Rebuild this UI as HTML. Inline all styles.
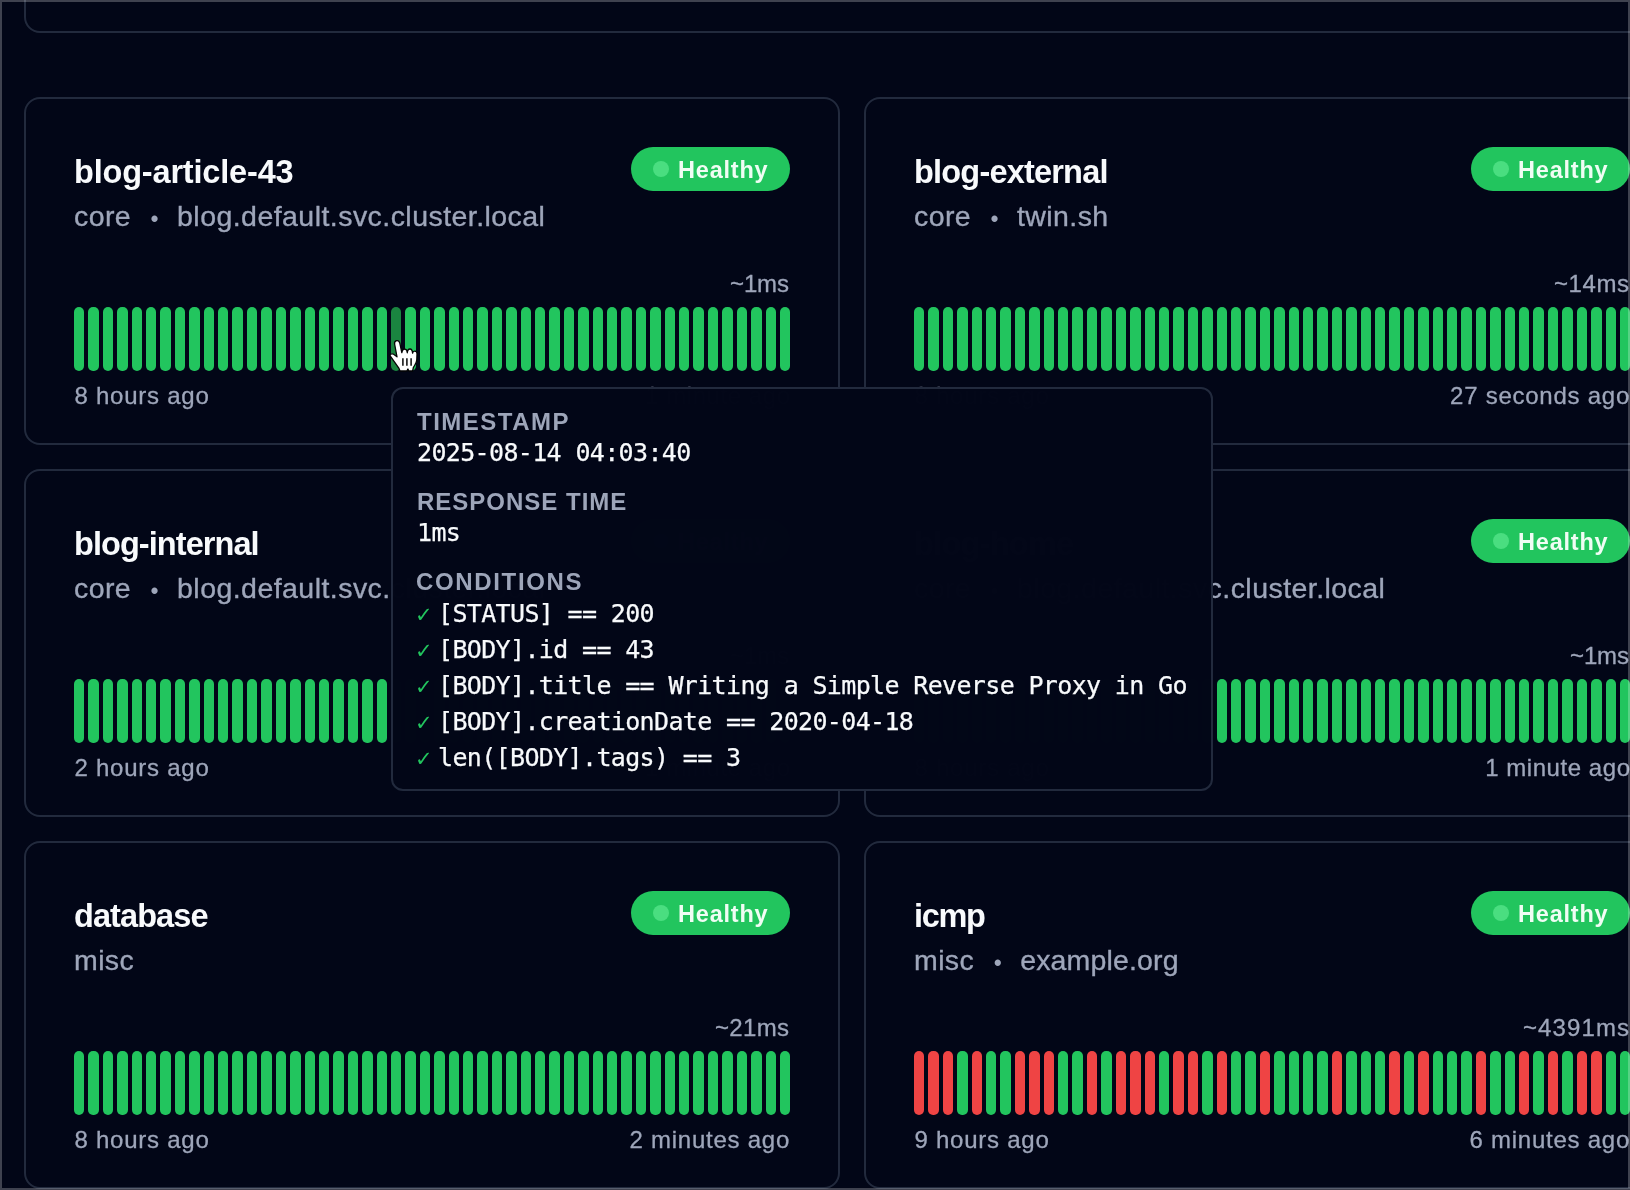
<!DOCTYPE html>
<html lang="en">
<head>
<meta charset="utf-8">
<title>Health Dashboard</title>
<style>
*{box-sizing:border-box;margin:0;padding:0}
html,body{width:1630px;height:1190px;overflow:hidden;background:#020617}
body{font-family:"Liberation Sans",sans-serif;color:#f8fafc;-webkit-font-smoothing:antialiased}
.page{position:relative;width:1630px;height:1190px;overflow:hidden;will-change:transform}
.frame{position:absolute;inset:0;border:2px solid rgba(255,255,255,.245);pointer-events:none;z-index:50}
.topcard{position:absolute;left:24px;top:-100px;width:1656px;height:133px;border:2px solid #222a3d;border-radius:16px}
.card{position:absolute;width:816px;height:348px;border:2px solid #222a3d;border-radius:16px}
.title{position:absolute;left:48px;top:53px;font-size:32.5px;line-height:40px;font-weight:700;color:#f8fafc;white-space:nowrap}
.badge{position:absolute;left:605px;top:48px;width:159px;height:44px;border-radius:22px;background:#22c55e;white-space:nowrap}
.pip{position:absolute;left:22px;top:14px;width:16px;height:16px;border-radius:50%;background:#4ade80}
.bt{position:absolute;left:47px;top:7px;font-size:23.5px;line-height:32px;font-weight:700;color:#f0fdf4;letter-spacing:.8px}
.sub{position:absolute;left:48px;top:96.5px;font-size:28.5px;line-height:40px;color:#9ea6ba;white-space:nowrap;letter-spacing:.4px;-webkit-text-stroke:.35px #9ea6ba}
.sub .dot{display:inline-block;width:13px;margin:0 16px 0 17px;font-size:23px;text-align:center;letter-spacing:0;position:relative;top:1.5px;-webkit-text-stroke:0}
.ms{position:absolute;right:49px;top:168.5px;font-size:24px;line-height:32px;color:#9ea6ba;white-space:nowrap;-webkit-text-stroke:.3px #9ea6ba}
.ms span,.ago span{display:inline-block}
.bars{position:absolute;left:48px;top:208px;width:716px;height:64px;display:flex;gap:4px}
.b{flex:1 1 0;height:64px;border-radius:5px;background:#22c55e;display:block}
.b.r{background:#ef4444}
.b.h{background:#1a8540}
.ago{position:absolute;top:281px;font-size:24px;line-height:32px;color:#9ea6ba;white-space:nowrap;letter-spacing:.75px;-webkit-text-stroke:.3px #9ea6ba}
.ago.l{left:48.5px}
.ago.r{right:48px}
.tip{position:absolute;left:391px;top:387px;width:822px;height:404px;border:2px solid #222a3d;border-radius:12px;background:rgba(2,6,23,.995);z-index:20}
.tip .lb{position:absolute;left:24px;font-size:24px;line-height:32px;font-weight:700;color:#9da5b9;letter-spacing:1.5px;white-space:nowrap}
.tip .v{position:absolute;left:24px;font-family:"DejaVu Sans Mono","Liberation Mono",monospace;font-size:25px;line-height:32px;color:#f8fafc;white-space:pre;letter-spacing:-.65px;-webkit-text-stroke:.25px #f8fafc}
.tip .c{position:absolute;left:24px;font-family:"DejaVu Sans Mono","Liberation Mono",monospace;font-size:25px;line-height:32px;color:#f8fafc;white-space:pre;letter-spacing:-.65px;-webkit-text-stroke:.25px #f8fafc}
.tip .c .ck{display:inline-block;width:21px;letter-spacing:0;color:#22c55e;font-family:"DejaVu Sans",sans-serif;font-weight:700;font-size:21px;line-height:32px;vertical-align:top;position:relative;left:-2px;top:1px;-webkit-text-stroke:0}
.cursor{position:absolute;left:387px;top:338px;z-index:30}

</style>
</head>
<body>
<div class="page">
<div class="topcard"></div>

<section class="card" style="left:24px;top:97px">
  <h3 class="title" style="letter-spacing:-0.18px">blog-article-43</h3>
  <div class="badge"><span class="pip"></span><span class="bt">Healthy</span></div>
  <p class="sub"><span>core</span><span class="dot">•</span><span style="letter-spacing:0.45px">blog.default.svc.cluster.local</span></p>
  <div class="ms"><span style="letter-spacing:-0.12px;margin-right:0.12px">~1ms</span></div>
  <div class="bars"><i class="b"></i><i class="b"></i><i class="b"></i><i class="b"></i><i class="b"></i><i class="b"></i><i class="b"></i><i class="b"></i><i class="b"></i><i class="b"></i><i class="b"></i><i class="b"></i><i class="b"></i><i class="b"></i><i class="b"></i><i class="b"></i><i class="b"></i><i class="b"></i><i class="b"></i><i class="b"></i><i class="b"></i><i class="b"></i><i class="b h"></i><i class="b"></i><i class="b"></i><i class="b"></i><i class="b"></i><i class="b"></i><i class="b"></i><i class="b"></i><i class="b"></i><i class="b"></i><i class="b"></i><i class="b"></i><i class="b"></i><i class="b"></i><i class="b"></i><i class="b"></i><i class="b"></i><i class="b"></i><i class="b"></i><i class="b"></i><i class="b"></i><i class="b"></i><i class="b"></i><i class="b"></i><i class="b"></i><i class="b"></i><i class="b"></i><i class="b"></i></div>
  <div class="ago l">8 hours ago</div>
  <div class="ago r"><span style="letter-spacing:0.55px;margin-right:-0.55px">1 minute ago</span></div>
</section>
<section class="card" style="left:864px;top:97px">
  <h3 class="title" style="letter-spacing:-0.8px">blog-external</h3>
  <div class="badge"><span class="pip"></span><span class="bt">Healthy</span></div>
  <p class="sub"><span>core</span><span class="dot">•</span><span style="letter-spacing:0.4px">twin.sh</span></p>
  <div class="ms"><span style="letter-spacing:0.57px;margin-right:-0.57px">~14ms</span></div>
  <div class="bars"><i class="b"></i><i class="b"></i><i class="b"></i><i class="b"></i><i class="b"></i><i class="b"></i><i class="b"></i><i class="b"></i><i class="b"></i><i class="b"></i><i class="b"></i><i class="b"></i><i class="b"></i><i class="b"></i><i class="b"></i><i class="b"></i><i class="b"></i><i class="b"></i><i class="b"></i><i class="b"></i><i class="b"></i><i class="b"></i><i class="b"></i><i class="b"></i><i class="b"></i><i class="b"></i><i class="b"></i><i class="b"></i><i class="b"></i><i class="b"></i><i class="b"></i><i class="b"></i><i class="b"></i><i class="b"></i><i class="b"></i><i class="b"></i><i class="b"></i><i class="b"></i><i class="b"></i><i class="b"></i><i class="b"></i><i class="b"></i><i class="b"></i><i class="b"></i><i class="b"></i><i class="b"></i><i class="b"></i><i class="b"></i><i class="b"></i><i class="b"></i></div>
  <div class="ago l">8 hours ago</div>
  <div class="ago r"><span>27 seconds ago</span></div>
</section>
<section class="card" style="left:24px;top:469px">
  <h3 class="title" style="letter-spacing:-0.93px">blog-internal</h3>
  <div class="badge"><span class="pip"></span><span class="bt">Healthy</span></div>
  <p class="sub"><span>core</span><span class="dot">•</span><span style="letter-spacing:0.45px">blog.default.svc.cluster.local</span></p>
  <div class="ms"><span style="letter-spacing:-0.12px;margin-right:0.12px">~1ms</span></div>
  <div class="bars"><i class="b"></i><i class="b"></i><i class="b"></i><i class="b"></i><i class="b"></i><i class="b"></i><i class="b"></i><i class="b"></i><i class="b"></i><i class="b"></i><i class="b"></i><i class="b"></i><i class="b"></i><i class="b"></i><i class="b"></i><i class="b"></i><i class="b"></i><i class="b"></i><i class="b"></i><i class="b"></i><i class="b"></i><i class="b"></i><i class="b"></i><i class="b"></i><i class="b"></i><i class="b"></i><i class="b"></i><i class="b"></i><i class="b"></i><i class="b"></i><i class="b"></i><i class="b"></i><i class="b"></i><i class="b"></i><i class="b"></i><i class="b"></i><i class="b"></i><i class="b"></i><i class="b"></i><i class="b"></i><i class="b"></i><i class="b"></i><i class="b"></i><i class="b"></i><i class="b"></i><i class="b"></i><i class="b"></i><i class="b"></i><i class="b"></i><i class="b"></i></div>
  <div class="ago l">2 hours ago</div>
  <div class="ago r"><span style="letter-spacing:0.55px;margin-right:-0.55px">1 minute ago</span></div>
</section>
<section class="card" style="left:864px;top:469px">
  <h3 class="title" style="letter-spacing:-0.74px">blog-home</h3>
  <div class="badge"><span class="pip"></span><span class="bt">Healthy</span></div>
  <p class="sub"><span>core</span><span class="dot">•</span><span style="letter-spacing:0.45px">blog.default.svc.cluster.local</span></p>
  <div class="ms"><span style="letter-spacing:-0.12px;margin-right:0.12px">~1ms</span></div>
  <div class="bars"><i class="b"></i><i class="b"></i><i class="b"></i><i class="b"></i><i class="b"></i><i class="b"></i><i class="b"></i><i class="b"></i><i class="b"></i><i class="b"></i><i class="b"></i><i class="b"></i><i class="b"></i><i class="b"></i><i class="b"></i><i class="b"></i><i class="b"></i><i class="b"></i><i class="b"></i><i class="b"></i><i class="b"></i><i class="b"></i><i class="b"></i><i class="b"></i><i class="b"></i><i class="b"></i><i class="b"></i><i class="b"></i><i class="b"></i><i class="b"></i><i class="b"></i><i class="b"></i><i class="b"></i><i class="b"></i><i class="b"></i><i class="b"></i><i class="b"></i><i class="b"></i><i class="b"></i><i class="b"></i><i class="b"></i><i class="b"></i><i class="b"></i><i class="b"></i><i class="b"></i><i class="b"></i><i class="b"></i><i class="b"></i><i class="b"></i><i class="b"></i></div>
  <div class="ago l">8 hours ago</div>
  <div class="ago r"><span style="letter-spacing:0.55px;margin-right:-0.55px">1 minute ago</span></div>
</section>
<section class="card" style="left:24px;top:841px">
  <h3 class="title" style="letter-spacing:-0.92px">database</h3>
  <div class="badge"><span class="pip"></span><span class="bt">Healthy</span></div>
  <p class="sub"><span>misc</span></p>
  <div class="ms"><span style="letter-spacing:0.32px;margin-right:-0.32px">~21ms</span></div>
  <div class="bars"><i class="b"></i><i class="b"></i><i class="b"></i><i class="b"></i><i class="b"></i><i class="b"></i><i class="b"></i><i class="b"></i><i class="b"></i><i class="b"></i><i class="b"></i><i class="b"></i><i class="b"></i><i class="b"></i><i class="b"></i><i class="b"></i><i class="b"></i><i class="b"></i><i class="b"></i><i class="b"></i><i class="b"></i><i class="b"></i><i class="b"></i><i class="b"></i><i class="b"></i><i class="b"></i><i class="b"></i><i class="b"></i><i class="b"></i><i class="b"></i><i class="b"></i><i class="b"></i><i class="b"></i><i class="b"></i><i class="b"></i><i class="b"></i><i class="b"></i><i class="b"></i><i class="b"></i><i class="b"></i><i class="b"></i><i class="b"></i><i class="b"></i><i class="b"></i><i class="b"></i><i class="b"></i><i class="b"></i><i class="b"></i><i class="b"></i><i class="b"></i></div>
  <div class="ago l">8 hours ago</div>
  <div class="ago r"><span>2 minutes ago</span></div>
</section>
<section class="card" style="left:864px;top:841px">
  <h3 class="title" style="letter-spacing:-1.35px">icmp</h3>
  <div class="badge"><span class="pip"></span><span class="bt">Healthy</span></div>
  <p class="sub"><span>misc</span><span class="dot">•</span><span style="letter-spacing:0.15px">example.org</span></p>
  <div class="ms"><span style="letter-spacing:1.1px;margin-right:-1.1px">~4391ms</span></div>
  <div class="bars"><i class="b r"></i><i class="b r"></i><i class="b r"></i><i class="b"></i><i class="b r"></i><i class="b"></i><i class="b"></i><i class="b r"></i><i class="b r"></i><i class="b r"></i><i class="b"></i><i class="b"></i><i class="b r"></i><i class="b"></i><i class="b r"></i><i class="b r"></i><i class="b r"></i><i class="b"></i><i class="b r"></i><i class="b r"></i><i class="b"></i><i class="b r"></i><i class="b"></i><i class="b"></i><i class="b r"></i><i class="b"></i><i class="b"></i><i class="b"></i><i class="b"></i><i class="b r"></i><i class="b"></i><i class="b"></i><i class="b"></i><i class="b r"></i><i class="b"></i><i class="b r"></i><i class="b"></i><i class="b"></i><i class="b"></i><i class="b r"></i><i class="b"></i><i class="b"></i><i class="b r"></i><i class="b"></i><i class="b r"></i><i class="b"></i><i class="b r"></i><i class="b r"></i><i class="b"></i><i class="b"></i></div>
  <div class="ago l">9 hours ago</div>
  <div class="ago r"><span>6 minutes ago</span></div>
</section>
<div class="tip">
  <div class="lb" style="top:17px;letter-spacing:1.5px">TIMESTAMP</div>
  <div class="v" style="top:48px">2025-08-14 04:03:40</div>
  <div class="lb" style="top:97px;letter-spacing:1.0px">RESPONSE TIME</div>
  <div class="v" style="top:128px">1ms</div>
  <div class="lb" style="top:177px;left:23px;letter-spacing:1.65px">CONDITIONS</div>
  <div class="c" style="top:208.5px"><span class="ck">✓</span><span class="t">[STATUS] == 200</span></div>
  <div class="c" style="top:244.5px"><span class="ck">✓</span><span class="t">[BODY].id == 43</span></div>
  <div class="c" style="top:280.5px"><span class="ck">✓</span><span class="t">[BODY].title == Writing a Simple Reverse Proxy in Go</span></div>
  <div class="c" style="top:316.5px"><span class="ck">✓</span><span class="t">[BODY].creationDate == 2020-04-18</span></div>
  <div class="c" style="top:352.5px"><span class="ck">✓</span><span class="t">len([BODY].tags) == 3</span></div>
</div>

<svg class="cursor" width="34" height="36" viewBox="0 0 34 36">
  <path d="M9.6 2.7 C11.2 2.3 12.3 3.4 12.8 5.2 L14.8 14.6 C15 12.4 16.3 11.2 17.8 11.2 C19.2 11.2 20.1 12.4 20.3 14.8 C20.5 12.3 21.7 11 23 11 C24.4 11 25.4 12.4 25.6 15.2 C25.9 13.7 26.9 13.1 27.9 13.2 C29.2 13.4 30 14.4 30 15.8 L29.8 21.5 C29.8 25 27.6 27.2 26.4 29.4 L25.6 33 L21.8 33 L20.9 31 L19.8 33 L13 33 L12 30.4 L3 17.6 C3.4 16 5.2 15.4 6.6 16.2 L10 18.8 L7.6 6 C7.3 4.4 8.2 3.1 9.6 2.7 Z" fill="#fff" stroke="#050505" stroke-width="1.3" stroke-linejoin="round"/>
  <path d="M15.9 20.2V27.7M19.9 20.2V27.7M24.1 20.2V27.7" stroke="#0a0a0a" stroke-width="1.5" fill="none"/>
</svg>

<div class="frame"></div>
</div>
</body>
</html>
